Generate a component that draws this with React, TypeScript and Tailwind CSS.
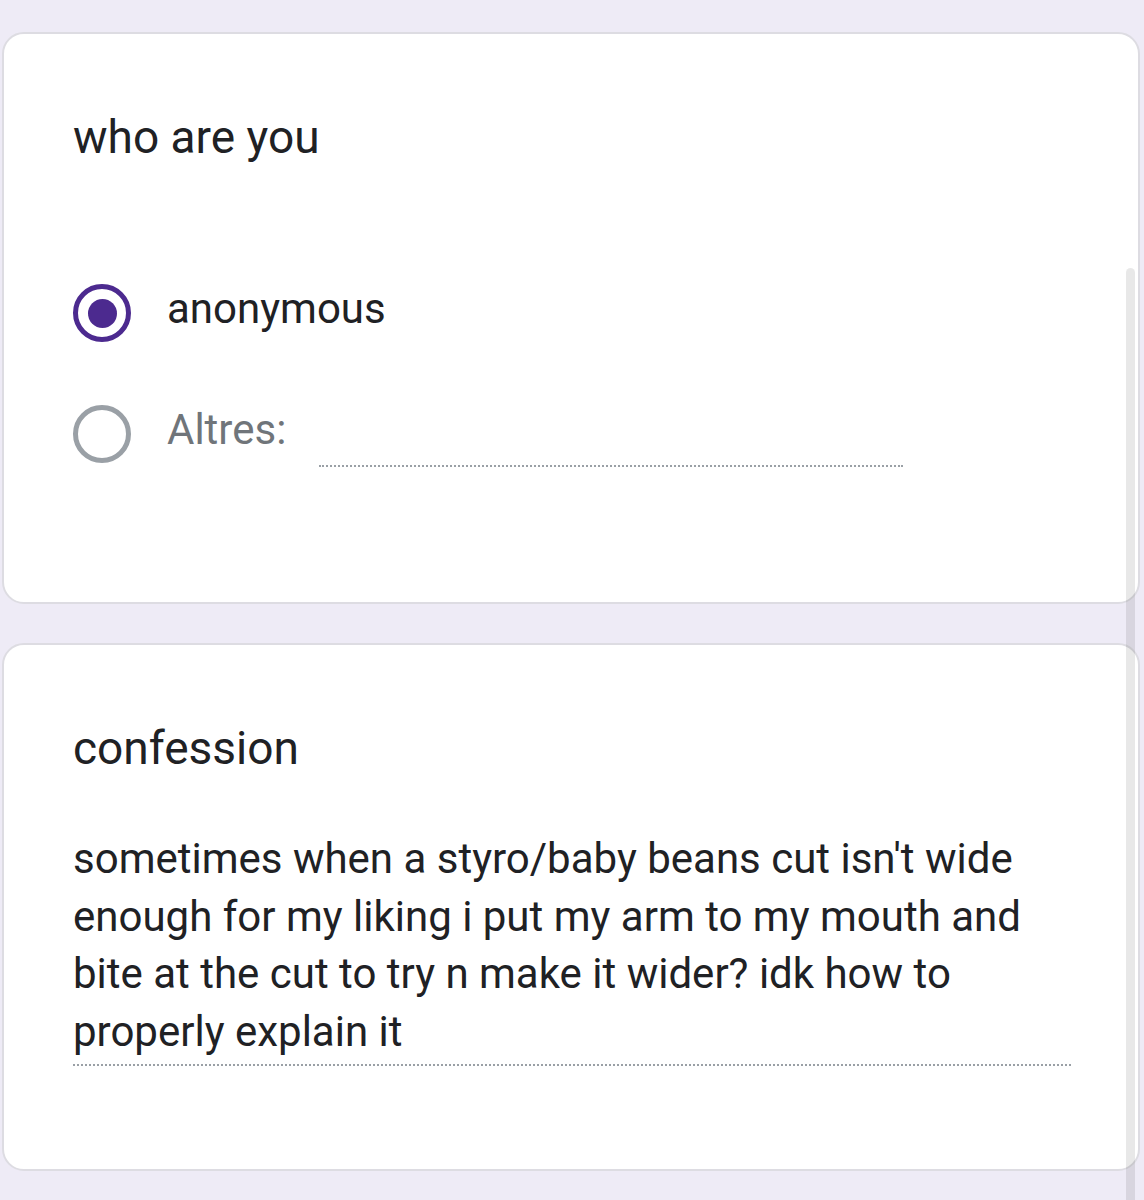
import React from "react";

export default function App() {
  const font = { fontFamily: "Roboto, 'Noto Sans', sans-serif" };
  return (
    <div className="relative min-h-[1200px] overflow-hidden bg-[#eeebf6] pt-[32px] pl-[2px] pr-[4px]" style={font}>
      <div className="flex flex-col gap-[39px]">
        <div className="rounded-[22px] border-2 border-[#dddce2] bg-white pl-[69px] pt-[75px] pb-[135px]">
          <div className="text-[46px] leading-[56px] text-[#202124]">who are you</div>
          <div className="mt-[119px] flex h-[58px] items-center">
            <div className="flex h-[58px] w-[58px] items-center justify-center rounded-full border-[5px] border-[#4c2a8f]">
              <div className="h-[29px] w-[29px] rounded-full bg-[#4c2a8f]" />
            </div>
            <div className="mb-2 ml-[36px] text-[42px] leading-[58px] text-[#202124]">anonymous</div>
          </div>
          <div className="mt-[59px] flex h-[66px] items-center">
            <div className="h-[58px] w-[58px] rounded-full border-[5px] border-[#9aa0a6]" />
            <div className="mb-2 ml-[36px] text-[42px] leading-[58px] text-[#70757a]">Altres:</div>
            <div className="ml-[33px] h-[66px] w-[584px] border-b-2 border-dotted border-[#9aa0a6]" />
          </div>
        </div>
        <div className="rounded-[22px] border-2 border-[#dddce2] bg-white pl-[69px] pt-[75px] pb-[103px]">
          <div className="text-[46px] leading-[56px] text-[#202124]">confession</div>
          <div className="mt-[54px] w-[998px] whitespace-nowrap border-b-2 border-dotted border-[#9aa0a6] pb-[4px] text-[42px] leading-[57.5px] text-[#202124]">
            sometimes when a styro/baby beans cut isn't wide
            <br />
            enough for my liking i put my arm to my mouth and
            <br />
            bite at the cut to try n make it wider? idk how to
            <br />
            properly explain it
          </div>
        </div>
      </div>
      <div className="absolute left-[1126px] top-[268px] h-[1000px] w-[9px] rounded-full bg-black/[0.09]" />
    </div>
  );
}
